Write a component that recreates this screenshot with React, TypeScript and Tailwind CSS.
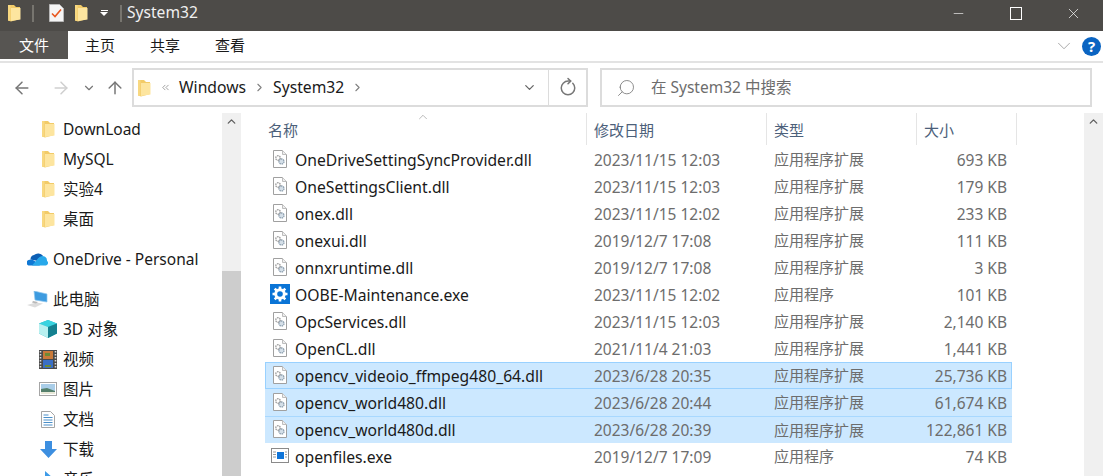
import { ArrowLeft, ArrowRight, ArrowUp, ChevronDown, ChevronRight, ChevronUp, ChevronsLeft, RotateCw, Search, Minus, X } from "lucide-react";

const FONT = "font-['Noto_Sans','Noto_Sans_CJK_SC',sans-serif]";

const files = [
  { name: "OneDriveSettingSyncProvider.dll", date: "2023/11/15 12:03", type: "应用程序扩展", size: "693 KB" },
  { name: "OneSettingsClient.dll", date: "2023/11/15 12:03", type: "应用程序扩展", size: "179 KB" },
  { name: "onex.dll", date: "2023/11/15 12:02", type: "应用程序扩展", size: "233 KB" },
  { name: "onexui.dll", date: "2019/12/7 17:08", type: "应用程序扩展", size: "111 KB" },
  { name: "onnxruntime.dll", date: "2019/12/7 17:08", type: "应用程序扩展", size: "3 KB" },
  { name: "OOBE-Maintenance.exe", date: "2023/11/15 12:02", type: "应用程序", size: "101 KB", icon: "gear" },
  { name: "OpcServices.dll", date: "2023/11/15 12:03", type: "应用程序扩展", size: "2,140 KB" },
  { name: "OpenCL.dll", date: "2021/11/4 21:03", type: "应用程序扩展", size: "1,441 KB" },
  { name: "opencv_videoio_ffmpeg480_64.dll", date: "2023/6/28 20:35", type: "应用程序扩展", size: "25,736 KB", selected: true, focused: true },
  { name: "opencv_world480.dll", date: "2023/6/28 20:44", type: "应用程序扩展", size: "61,674 KB", selected: true },
  { name: "opencv_world480d.dll", date: "2023/6/28 20:39", type: "应用程序扩展", size: "122,861 KB", selected: true, divider: true },
  { name: "openfiles.exe", date: "2019/12/7 17:09", type: "应用程序", size: "74 KB", icon: "window" },
];

function FolderIcon() {
  return (
    <svg width="13" height="18" viewBox="0 0 13 18" className="shrink-0">
      <path d="M0 1h6l2 2h4v12l-9 2.500-3-1z" fill="#f2cb68" />
      <path d="M3 4h9.500v11.500L3 17z" fill="#fde59f" />
      <path d="M0 1h2.500v16L0 16.500z" fill="#f8d880" />
    </svg>
  );
}

function DllIcon() {
  return (
    <svg width="14" height="18" viewBox="0 0 14 18" className="shrink-0">
      <path d="M.5.500h9l4 4v13h-13z" fill="#fff" stroke="#a0a0a0" />
      <path d="M9.500.5v4h4" fill="#eee" stroke="#bdbdbd" />
      <circle cx="5" cy="8" r="2.300" fill="none" stroke="#a2a2a2" strokeWidth="1.500" strokeDasharray="1.500 .7" />
      <circle cx="8.500" cy="11.500" r="2.500" fill="#d4dfe8" stroke="#8a9cac" strokeWidth="1.300" strokeDasharray="1.500 .7" />
    </svg>
  );
}

function GearTile() {
  return (
    <svg width="20" height="20" viewBox="0 0 20 20" className="shrink-0">
      <rect width="20" height="20" fill="#0a74d6" />
      <path d="M10 2.500v15M2.500 10h15M4.700 4.700l10.600 10.600M15.300 4.700L4.700 15.300" stroke="#fff" strokeWidth="2.600" />
      <circle cx="10" cy="10" r="4.500" fill="none" stroke="#fff" strokeWidth="2.500" />
      <circle cx="10" cy="10" r="2.800" fill="#0a74d6" />
    </svg>
  );
}

function WindowIcon() {
  return (
    <svg width="18" height="15" viewBox="0 0 18 15" className="shrink-0">
      <rect x=".5" y=".5" width="17" height="14" fill="#fff" stroke="#8a8a8a" />
      <rect x="6" y="4" width="7" height="7" fill="#0f74d8" />
      <path d="M2 4h3M2 6.500h3M2 9h3M14 4h2M14 6.500h2M14 9h2" stroke="#9a9a9a" />
    </svg>
  );
}

function NotepadCheckIcon() {
  return (
    <svg width="15" height="18" viewBox="0 0 15 18" className="shrink-0">
      <path d="M.5.500h10l4 4v13h-14z" fill="#f5f5f5" stroke="#b8b8b8" />
      <path d="M3 9.500l3 3 6-7" fill="none" stroke="#e8571f" strokeWidth="1.600" />
    </svg>
  );
}

function CloudIcon() {
  return (
    <svg width="21" height="14" viewBox="0 0 21 14" className="shrink-0">
      <path d="M3.500 7.500a4.500 4.500 0 0 1 3.500-4.500A6 6 0 0 1 16 4l-5 5z" fill="#0c5fb4" />
      <path d="M1.500 13.500a3 3 0 0 1 0-5.500c1.500-.8 3-.8 4.500 0l4 2.500 3 3z" fill="#1078d4" />
      <path d="M5 13.500h14a2.500 2.500 0 0 0 1-4.500 4.500 4.500 0 0 0-6.500-4.500C11 5.500 9.500 9 5 13.500z" fill="#28a8ea" />
    </svg>
  );
}

function PcIcon() {
  return (
    <svg width="21" height="17" viewBox="0 0 21 17" className="shrink-0">
      <path d="M7 0l13 3v8L8 9z" fill="#3d9be0" stroke="#8cc6ee" strokeWidth=".7" />
      <path d="M0 14l9-2.500 7 1-8 4z" fill="#dcdcdc" />
      <path d="M6 10l5 1-2 1.500-4-1z" fill="#b8b8b8" />
    </svg>
  );
}

function CubeIcon() {
  return (
    <svg width="18" height="18" viewBox="0 0 18 18" className="shrink-0">
      <path d="M9 0l9 3.500v10L9 18 0 13.500v-10z" fill="#2bb3c4" />
      <path d="M9 0l9 3.500L9 7 0 3.500z" fill="#39d3e0" />
      <path d="M0 3.500L9 7v11L0 13.500z" fill="#b8f0f0" />
      <path d="M9 7l9-3.500v10L9 18z" fill="#15808f" />
    </svg>
  );
}

function FilmIcon() {
  return (
    <svg width="18" height="19" viewBox="0 0 18 19" className="shrink-0">
      <rect width="18" height="19" fill="#4a4a4a" />
      <path d="M1.500 1v17M16.500 1v17" stroke="#ddd" strokeWidth="1.600" strokeDasharray="1.500 1.500" />
      <rect x="4" y="1" width="10" height="8" fill="#c97a3a" />
      <rect x="4" y="10" width="10" height="8" fill="#3b6fc4" />
      <path d="M6 3h5v3H6zM6 15h6v2H6z" fill="#6d8a35" />
    </svg>
  );
}

function PictureIcon() {
  return (
    <svg width="18" height="14" viewBox="0 0 18 14" className="shrink-0">
      <rect x=".5" y=".5" width="17" height="13" fill="#fff" stroke="#a5a5a5" />
      <rect x="2" y="2" width="14" height="10" fill="#a9cde8" />
      <path d="M2 7l6-1 8 3v3H2z" fill="#55806c" />
      <path d="M2 10h14v2H2z" fill="#e8e8d8" />
    </svg>
  );
}

function DocIcon() {
  return (
    <svg width="14" height="17" viewBox="0 0 14 17" className="shrink-0">
      <path d="M.5.500h9l4 4v12h-13z" fill="#fff" stroke="#a5a5a5" />
      <path d="M2.500 4h5M2.500 6.500h9M2.500 9h9M2.500 11.500h9M2.500 14h9" stroke="#4a8fc9" />
    </svg>
  );
}

function DownloadIcon() {
  return (
    <svg width="17" height="17" viewBox="0 0 17 17" className="shrink-0">
      <path d="M5 0h7v8h5l-8.500 9L0 8h5z" fill="#3d8fe0" />
    </svg>
  );
}

function MusicIcon() {
  return (
    <svg width="14" height="16" viewBox="0 0 14 16" className="shrink-0">
      <path d="M4 0l8 7-3 1-3-2v8a3 3 0 1 1-2-3z" fill="#3d9be8" />
    </svg>
  );
}

function HelpIcon() {
  return (
    <div className="flex size-[19px] items-center justify-center rounded-full bg-[#0a64c2] text-[15px] font-bold leading-none text-white">?</div>
  );
}

function NavItem({ icon, label, indent }: { icon: React.ReactNode; label: string; indent: "child" | "root" }) {
  return (
    <div className={`flex h-[30px] shrink-0 items-center ${indent === "child" ? "pl-[39px]" : "pl-[27px]"}`}>
      <div className={`flex items-center justify-center ${indent === "child" ? "w-[18px]" : "w-[21px]"}`}>{icon}</div>
      <span className={`pt-[2px] ${indent === "child" ? "ml-[6px]" : "ml-[5px]"}`}>{label}</span>
    </div>
  );
}

function Scrollbar({ thumb }: { thumb?: boolean }) {
  return (
    <div className="flex w-[19px] shrink-0 flex-col bg-[#f0f0f0]">
      <div className="flex h-[17px] items-center justify-center text-[#606060]">
        <ChevronUp size={13} strokeWidth={2.500} />
      </div>
      {thumb && <div className="mt-[141px] flex-1 bg-[#cdcdcd]" />}
    </div>
  );
}

export default function App() {
  return (
    <div className={`${FONT} flex h-[476px] w-[1103px] flex-col overflow-hidden bg-white text-[15.5px] text-[#1a1a1a]`}>
      {/* title bar */}
      <div className="flex h-[31px] shrink-0 items-center bg-[#4d4b48] pb-[5px] text-white">
        <div className="ml-[8px]"><FolderIcon /></div>
        <div className="ml-[11px] h-[17px] w-[2px] bg-[#77756f]" />
        <div className="ml-[15px]"><NotepadCheckIcon /></div>
        <div className="ml-[11px]"><FolderIcon /></div>
        <div className="ml-[12px] flex w-[8px] flex-col items-center">
          <div className="mb-[1px] h-px w-[7px] bg-white" />
          <div className="size-0 border-x-[4px] border-t-[4px] border-x-transparent border-t-white" />
        </div>
        <div className="ml-[12px] h-[17px] w-[2px] bg-[#77756f]" />
        <span className="ml-[5px] text-[15.6px] text-[#f0f0f0]">System32</span>
        <div className="ml-auto flex items-center">
          <div className="flex w-[58px] justify-center"><Minus size={15} strokeWidth={1} /></div>
          <div className="flex w-[58px] justify-center"><div className="h-[13px] w-[12px] border border-white" /></div>
          <div className="flex w-[58px] justify-center pr-[1px]"><X size={17} strokeWidth={1} /></div>
        </div>
      </div>

      {/* ribbon tabs */}
      <div className="flex h-[32px] shrink-0 border-b-2 border-[#e3e3e3]">
        <div className="flex h-[28px] w-[68px] items-center justify-center bg-[#575552] text-[15px] text-white">文件</div>
        <div className="flex h-[28px] items-center text-[15px]">
          <span className="ml-[17px]">主页</span>
          <span className="ml-[35px]">共享</span>
          <span className="ml-[35px]">查看</span>
        </div>
        <div className="ml-auto flex h-[30px] items-center pr-[2px]">
          <ChevronDown size={22} strokeWidth={0.800} className="mr-[7px] text-[#8a8a8a]" />
          <HelpIcon />
        </div>
      </div>

      {/* address row */}
      <div className="mt-[5px] flex h-[39px] shrink-0 items-center">
        <div className="flex w-[132px] items-center text-[#777]">
          <ArrowLeft size={20} strokeWidth={1.800} className="ml-[12px]" />
          <ArrowRight size={20} strokeWidth={1.800} className="ml-[19px] text-[#cfcfcf]" />
          <ChevronDown size={14} strokeWidth={2} className="ml-[11px]" />
          <ArrowUp size={20} strokeWidth={1.800} className="ml-[9px]" />
        </div>
        <div className="flex h-[39px] w-[456px] items-center border-2 border-[#dcdcdc]">
          <div className="ml-[4px]"><FolderIcon /></div>
          <ChevronsLeft size={11} strokeWidth={1.500} className="ml-[9px] text-[#777]" />
          <span className="ml-[8px] text-[15.7px]">Windows</span>
          <ChevronRight size={13} strokeWidth={2} className="ml-[7px] text-[#808080]" />
          <span className="ml-[7px] text-[15.7px]">System32</span>
          <ChevronRight size={13} strokeWidth={2} className="ml-[7px] text-[#808080]" />
          <ChevronDown size={15} strokeWidth={2} className="ml-auto mr-[11px] text-[#666]" />
          <div className="flex h-full w-[38px] items-center justify-center border-l border-[#dcdcdc] text-[#777]">
            <RotateCw size={18} strokeWidth={2} className="-rotate-45" />
          </div>
        </div>
        <div className="ml-[12px] flex h-[39px] w-[492px] items-center border-2 border-[#dcdcdc] text-[15.5px] text-[#6d6d6d]">
          <Search size={20} strokeWidth={1} className="ml-[14px] -scale-x-100 text-[#777]" />
          <span className="ml-[15px]">在 System32 中搜索</span>
        </div>
      </div>

      {/* body */}
      <div className="mt-[6px] flex min-h-0 flex-1">
        <div className="flex w-[222px] shrink-0 flex-col overflow-hidden pt-px">
          <NavItem indent="child" icon={<FolderIcon />} label="DownLoad" />
          <NavItem indent="child" icon={<FolderIcon />} label="MySQL" />
          <NavItem indent="child" icon={<FolderIcon />} label="实验4" />
          <NavItem indent="child" icon={<FolderIcon />} label="桌面" />
          <div className="mt-[10px]">
            <NavItem indent="root" icon={<CloudIcon />} label="OneDrive - Personal" />
          </div>
          <div className="mt-[10px]">
            <NavItem indent="root" icon={<PcIcon />} label="此电脑" />
          </div>
          <NavItem indent="child" icon={<CubeIcon />} label="3D 对象" />
          <NavItem indent="child" icon={<FilmIcon />} label="视频" />
          <NavItem indent="child" icon={<PictureIcon />} label="图片" />
          <NavItem indent="child" icon={<DocIcon />} label="文档" />
          <NavItem indent="child" icon={<DownloadIcon />} label="下载" />
          <NavItem indent="child" icon={<MusicIcon />} label="音乐" />
        </div>
        <Scrollbar thumb />

        <div className="ml-[24px] flex min-w-0 flex-1 flex-col">
          {/* column header */}
          <div className="relative flex h-[33px] shrink-0 text-[15px] text-[#4c607a]">
            <div className="flex h-[32px] w-[322px] items-center border-r border-[#e5e5e5] pl-[3px] pt-[2px]">名称</div>
            <div className="flex h-[32px] w-[180px] items-center border-r border-[#e5e5e5] pl-[7px] pt-[2px]">修改日期</div>
            <div className="flex h-[32px] w-[150px] items-center border-r border-[#e5e5e5] pl-[7px] pt-[2px]">类型</div>
            <div className="flex h-[32px] w-[100px] items-center border-r border-[#e5e5e5] pl-[7px] pt-[2px]">大小</div>
            <ChevronUp size={14} strokeWidth={1} className="absolute left-[151px] top-[-3px] text-[#8a8a8a]" />
          </div>
          {/* file rows */}
          <div className="flex w-[747px] flex-col">
            {files.map((file) => (
              <div
                key={file.name}
                className={`flex h-[27px] shrink-0 items-center ${file.selected ? "bg-[#cce8ff]" : ""} ${file.focused ? "outline outline-1 -outline-offset-1 outline-[#99d1ff]" : ""} ${file.divider ? "border-t border-[#a8d8ff]" : ""}`}
              >
                <div className="flex w-[30px] justify-center pb-[2px]">
                  {file.icon === "gear" ? <GearTile /> : file.icon === "window" ? <WindowIcon /> : <DllIcon />}
                </div>
                <span className="w-[299px] whitespace-nowrap pt-[2px] text-[15.7px]">{file.name}</span>
                <span className="w-[180px] whitespace-nowrap pt-[2px] text-[#6d6d6d]">{file.date}</span>
                <span className="w-[133px] whitespace-nowrap text-[15px] text-[#6d6d6d]">{file.type}</span>
                <span className="w-[100px] whitespace-nowrap pt-[2px] text-right text-[#6d6d6d]">{file.size}</span>
              </div>
            ))}
          </div>
        </div>
        <Scrollbar />
      </div>
    </div>
  );
}
